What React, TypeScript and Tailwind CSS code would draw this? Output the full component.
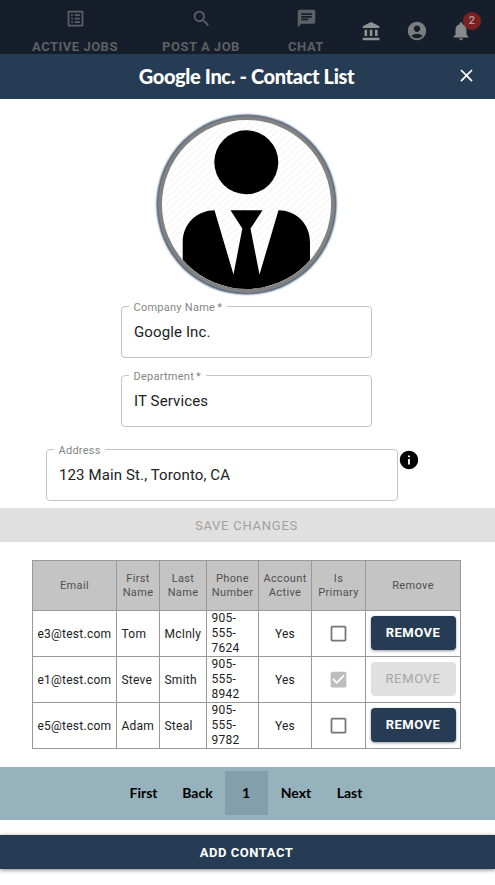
import React from "react";
import {
  MdListAlt,
  MdSearch,
  MdChat,
  MdAccountCircle,
  MdNotifications,
  MdClose,
  MdInfo,
  MdCheckBox,
  MdCheckBoxOutlineBlank,
} from "react-icons/md";

type Contact = {
  email: string;
  first: string;
  last: string;
  phone: string[];
  primary: boolean;
};

const contacts: Contact[] = [
  { email: "e3@test.com", first: "Tom", last: "McInly", phone: ["905-", "555-", "7624"], primary: false },
  { email: "e1@test.com", first: "Steve", last: "Smith", phone: ["905-", "555-", "8942"], primary: true },
  { email: "e5@test.com", first: "Adam", last: "Steal", phone: ["905-", "555-", "9782"], primary: false },
];

const headings = [["Email"], ["First", "Name"], ["Last", "Name"], ["Phone", "Number"], ["Account", "Active"], ["Is", "Primary"], ["Remove"]];

function BankIcon() {
  return (
    <svg viewBox="0 0 24 24" width="21" height="21" className="shrink-0 fill-[#909193]">
      <path d="M4 10v7h3v-7H4zm6 0v7h3v-7h-3zM2 22h19v-3H2v3zm14-12v7h3v-7h-3zm-4.500-9L2 6v2h19V6l-9.500-5z" />
    </svg>
  );
}

function NavItem({ icon, label, className }: { icon: React.ReactNode; label: string; className: string }) {
  return (
    <div className={`flex flex-col items-center pt-[8px] ${className}`}>
      <div className="shrink-0">{icon}</div>
      <span className="mt-[9px] whitespace-nowrap text-[13px] font-bold leading-[18px] tracking-[0.5px]">{label}</span>
    </div>
  );
}

function NavBar() {
  return (
    <header className="flex h-[54px] shrink-0 overflow-hidden bg-[#151e2a] text-[#5d6065]">
      <NavItem className="ml-[25px] w-[100px]" icon={<MdListAlt size={21} />} label="ACTIVE JOBS" />
      <NavItem className="ml-[26px] w-[100px]" icon={<MdSearch size={21} />} label="POST A JOB" />
      <NavItem className="ml-[25px] w-[60px]" icon={<MdChat size={21} />} label="CHAT" />
      <div className="ml-[25px] flex h-[62px] items-center text-[#7a7c80]">
        <BankIcon />
        <MdAccountCircle size={22} className="ml-[24px]" />
        <div className="relative ml-[22px]">
          <MdNotifications size={22} className="text-[#88898b]" />
          <span className="absolute -top-[8px] left-[13px] flex h-[18px] w-[18px] items-center justify-center rounded-full bg-[#7c211f] text-[11px] font-medium text-[#a8a4a4]">
            2
          </span>
        </div>
      </div>
    </header>
  );
}

function Avatar() {
  return (
    <div className="-ml-[2px] mt-[17px] h-[177px] w-[177px] shrink-0 self-center rounded-full border-4 border-[#828282] bg-white shadow-[0_0_2px_1.5px_#3f5670]">
      <svg viewBox="0 0 169 169" className="block h-full w-full rounded-full">
        <defs>
          <pattern id="hatch" width="5" height="5" patternUnits="userSpaceOnUse" patternTransform="rotate(48)">
            <rect width="1.2" height="5" fill="#f5f5f5" />
          </pattern>
          <clipPath id="disc">
            <circle cx="84.5" cy="84.5" r="84.5" />
          </clipPath>
        </defs>
        <g clipPath="url(#disc)">
          <rect width="169" height="169" fill="url(#hatch)" />
          <circle cx="84.3" cy="42.3" r="32" />
          <path d="M20.700 169V122C20.700 104 35 90.300 52.500 90.300L71.500 154.500L80.300 108.500L68.500 90.300H100.500L88.500 108.500L97.500 154.500L116.500 90.300C134 90.300 148 104 148 122V169Z" />
        </g>
      </svg>
    </div>
  );
}

function Field({ label, required, value, className }: { label: string; required?: boolean; value: string; className: string }) {
  return (
    <fieldset className={`h-[57px] rounded-[4px] border border-[#c4c4c4] pl-[7px] ${className}`}>
      <legend className="h-[11px] px-[4.5px] text-[11px] leading-[13px] tracking-[0.26px] text-[#858585]">
        {label}
        {required && <span className="ml-[2px]">*</span>}
      </legend>
      <div className="mt-[11px] pl-[5px] text-[15px] leading-[18px] tracking-[0.12px] text-[#212121]">{value}</div>
    </fieldset>
  );
}

const cell = "flex items-center border-b border-r border-[#999]";

function ContactTable() {
  return (
    <div className="ml-[32px] mt-[18px] grid w-[429px] grid-cols-[84px_43px_47px_52px_53px_54px_95px] grid-rows-[50px_46px_46px_46px] border-l border-t border-[#999] text-[12px] tracking-[0.24px] text-[#212121]">
      {headings.map((lines) => (
        <div key={lines.join()} className={`${cell} flex-col justify-center bg-[#c4c4c4] text-[11px] leading-[14px] tracking-[0.36px] text-[#505050]`}>
          {lines.map((line) => (
            <span key={line}>{line}</span>
          ))}
        </div>
      ))}
      {contacts.map((c) => (
        <React.Fragment key={c.email}>
          <div className={`${cell} pl-[4.5px]`}>{c.email}</div>
          <div className={`${cell} pl-[4.5px]`}>{c.first}</div>
          <div className={`${cell} pl-[4.5px]`}>{c.last}</div>
          <div className={`${cell} flex-col !items-start justify-center pl-[4.5px] leading-[15px]`}>
            {c.phone.map((part) => (
              <span key={part}>{part}</span>
            ))}
          </div>
          <div className={`${cell} justify-center`}>Yes</div>
          <div className={`${cell} justify-center`}>
            {c.primary ? <MdCheckBox size={21} className="text-[#bdbdbd]" /> : <MdCheckBoxOutlineBlank size={21} className="text-[#757575]" />}
          </div>
          <div className={`${cell} justify-center pb-[2px]`}>
            <button
              disabled={c.primary}
              className={`h-[34px] w-[85px] rounded-[4px] text-[13px] ${
                c.primary
                  ? "bg-[#e0e0e0] tracking-[0.65px] text-[#a6a6a6]"
                  : "bg-[#263b54] font-bold tracking-[0.5px] text-white shadow-[0_1px_3px_rgba(0,0,0,0.4)]"
              }`}
            >
              REMOVE
            </button>
          </div>
        </React.Fragment>
      ))}
    </div>
  );
}

function Pagination() {
  return (
    <nav className="mt-[18px] flex h-[53px] shrink-0 items-center justify-center bg-[#96b3bd] pb-[2px] pr-[4px] font-['Lato','Liberation_Sans',sans-serif] text-[14px] font-bold text-black">
      <span className="w-[54px] text-center">First</span>
      <span className="w-[54px] text-center">Back</span>
      <span className="flex h-[44px] w-[43px] items-center justify-center bg-[#829fab]">1</span>
      <span className="w-[57px] text-center">Next</span>
      <span className="w-[50px] text-center">Last</span>
    </nav>
  );
}

export default function App() {
  return (
    <div className="flex h-[885px] w-[495px] flex-col overflow-hidden bg-white font-['Roboto','Liberation_Sans',sans-serif]">
      <NavBar />
      <div className="grid h-[45px] shrink-0 grid-cols-[58px_1fr_58px] items-center bg-[#263b54] text-white">
        <h1 className="col-start-2 whitespace-nowrap pb-[2px] pr-[2px] text-center font-['Lato','Liberation_Sans',sans-serif] text-[20px] font-black tracking-[-0.36px]">
          Google Inc. - Contact List
        </h1>
        <MdClose size={21} className="-mt-[3px] ml-[19px]" />
      </div>
      <Avatar />
      <Field label="Company Name" required value="Google Inc." className="ml-[121px] mt-[8px] w-[251px]" />
      <Field label="Department" required value="IT Services" className="ml-[121px] mt-[12px] w-[251px]" />
      <div className="ml-[46px] mt-[17px] flex">
        <Field label="Address" value="123 Main St., Toronto, CA" className="w-[352px]" />
        <MdInfo size={22} className="mt-[5px] text-black" />
      </div>
      <button disabled className="mt-[7px] h-[34px] shrink-0 bg-[#e0e0e0] pr-[2px] pt-[1px] text-[13px] tracking-[0.75px] text-[#a0a0a0]">
        SAVE CHANGES
      </button>
      <ContactTable />
      <Pagination />
      <button className="mt-[15px] h-[34px] shrink-0 bg-[#263b54] pr-[2px] pt-[2px] text-[13px] font-bold tracking-[0.55px] text-white shadow-[0_1px_4px_rgba(0,0,0,0.5)]">
        ADD CONTACT
      </button>
    </div>
  );
}
